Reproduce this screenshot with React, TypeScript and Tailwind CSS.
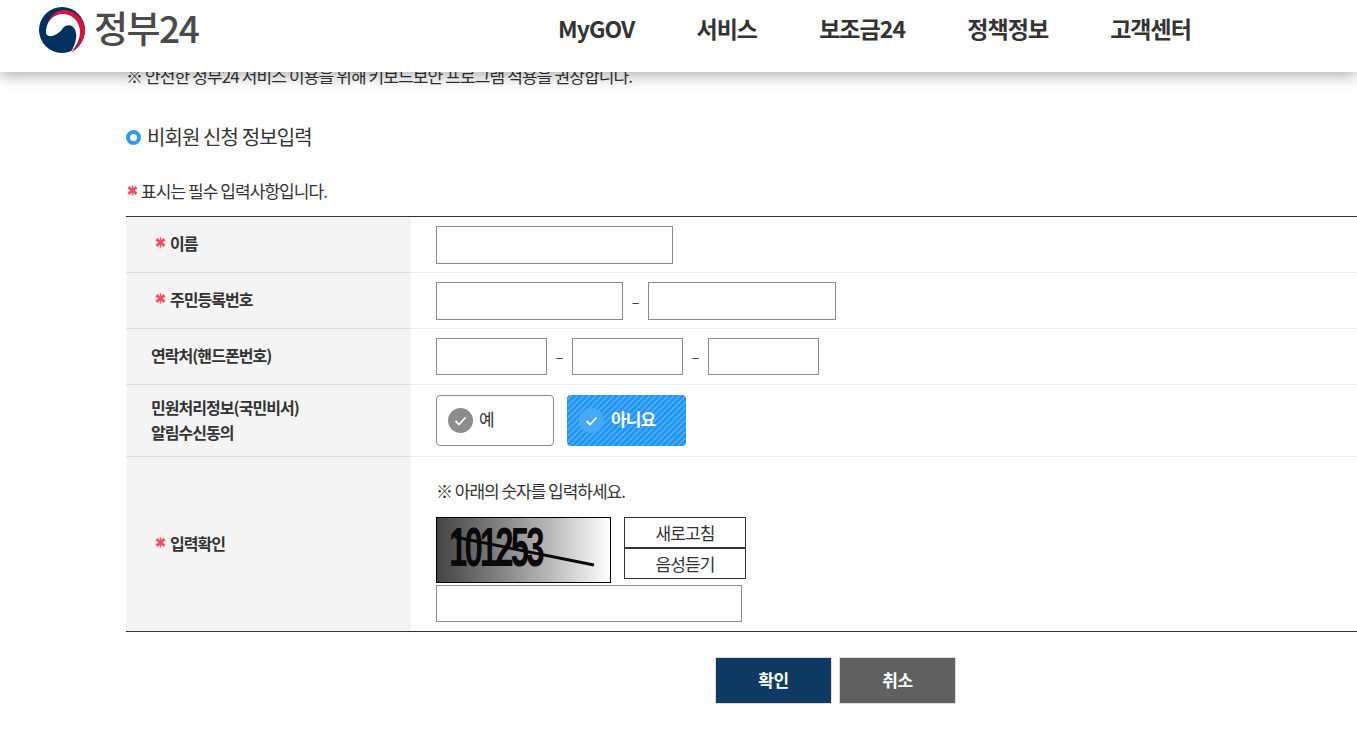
import React from 'react';

const FONT = "font-['Noto_Sans_CJK_KR','Noto_Sans',sans-serif]";

const navItems = ['MyGOV', '서비스', '보조금24', '정책정보', '고객센터'];

function Logo() {
  return (
    <svg width="46" height="46" viewBox="0 0 46 46" className="shrink-0">
      <circle cx="23" cy="23" r="23" fill="#00305f" />
      <path d="M8 19C10 9 17 3 25 3C36 3 46 12 46 23C46 33 40 41 32 46C38 40 42 32 41 24C40 14 32 6.500 24 7C16 7 10 12 8 19Z" fill="#d8133a" />
      <path d="M7 26C6.500 15 14 7 24 7C33 7 40.500 14 41 24C41.500 32 37 40 32 45C36 38 38 31 37 26C36 18 28 16 24 21C21 26 14 30 10 29C8 28.500 7 27 7 26Z" fill="#fff" />
    </svg>
  );
}

function Star() {
  return (
    <svg width="11" height="11" viewBox="0 0 11 11" className="mr-[4px] -mt-[2px] shrink-0">
      <path d="M5.500 0.500V10.500M1 3L10 8M10 3L1 8M2 1.500L9 9.500M9 1.500L2 9.500" stroke="#f0505f" strokeWidth="1.600" fill="none" />
      <circle cx="5.500" cy="5.500" r="2.500" fill="#f0505f" />
    </svg>
  );
}

function Check({ active }: { active?: boolean }) {
  return (
    <svg width="25" height="25" viewBox="0 0 25 25" className="shrink-0">
      <circle cx="12.500" cy="12.500" r="12.500" fill={active ? '#45a9f7' : '#8c8c8c'} />
      <path d="M7.500 13l3.500 3.500 6.500-7" fill="none" stroke="#fff" strokeWidth="1.800" />
    </svg>
  );
}

function TextBox({ className }: { className: string }) {
  return <input type="text" className={`block border border-[#8a8a8a] bg-white ${className}`} />;
}

function Dash() {
  return <span className="w-[25px] text-center text-[14px] text-[#333]">–</span>;
}

function Row({ label, required, height, children }: { label: React.ReactNode; required?: boolean; height: string; children: React.ReactNode }) {
  return (
    <div className={`flex ${height} border-b border-[#eeeeee]`}>
      <div className={`flex w-[285px] shrink-0 items-center bg-[#f4f4f4] pb-[2px] text-[16px] leading-[25px] font-bold tracking-[-0.06em] text-[#333] -mb-px border-b border-[#dddddd] ${required ? 'pl-[29px]' : 'pl-[25px]'}`}>
        {required && <Star />}
        <div>{label}</div>
      </div>
      <div className="flex-1 pl-[25px]">{children}</div>
    </div>
  );
}

export default function App() {
  return (
    <div className={`h-[748px] w-[1357px] overflow-hidden bg-white ${FONT}`}>
      {/* Header */}
      <header className="relative z-10 flex h-[72px] items-start bg-white pl-[39px] shadow-[0_4px_14px_rgba(0,0,0,0.3)]">
        <div className="flex w-[519px] items-center pt-[7px]">
          <Logo />
          <span className="ml-[9px] -mt-[6px] text-[37px] leading-[44px] font-medium tracking-[-0.04em] text-[#4a4a4a]">정부24</span>
        </div>
        <nav className="flex gap-[62px] pt-[12px]">
          {navItems.map((item) => (
            <a key={item} className="text-[23px] leading-[32px] font-bold tracking-[-0.04em] text-[#333]">{item}</a>
          ))}
        </nav>
      </header>

      <main className="w-[1545px] pl-[126px]">
        <p className="-mt-[8px] text-[17px] leading-[24px] tracking-[-0.052em] text-[#333]">※ 안전한 정부24 서비스 이용을 위해 키보드보안 프로그램 적용을 권장합니다.</p>

        <h2 className="mt-[34px] flex items-center text-[20px] leading-[30px] tracking-[-0.045em] text-[#333]">
          <span className="mr-[6px] h-[15px] w-[15px] rounded-full border-[4px] border-[#2b9bf4] bg-white" />
          비회원 신청 정보입력
        </h2>

        <p className="mt-[27px] flex items-center text-[17px] leading-[24px] tracking-[-0.055em] text-[#333]">
          <span className="ml-[1px] -mr-px"><Star /></span>표시는 필수 입력사항입니다.
        </p>

        {/* Form table */}
        <div className="mt-[13px] border-y border-[#333]">
          <Row label="이름" required height="h-[56px]">
            <div className="pt-[9px]"><TextBox className="h-[38px] w-[237px]" /></div>
          </Row>
          <Row label="주민등록번호" required height="h-[56px]">
            <div className="flex items-center pt-[9px]">
              <TextBox className="h-[38px] w-[187px]" />
              <Dash />
              <TextBox className="h-[38px] w-[188px]" />
            </div>
          </Row>
          <Row label="연락처(핸드폰번호)" height="h-[56px]">
            <div className="flex items-center pt-[9px]">
              <TextBox className="h-[37px] w-[111px]" />
              <Dash />
              <TextBox className="h-[37px] w-[111px]" />
              <Dash />
              <TextBox className="h-[37px] w-[111px]" />
            </div>
          </Row>
          <Row label={<>민원처리정보(국민비서)<br />알림수신동의</>} height="h-[72px]">
            <div className="flex gap-[13px] pt-[10px]">
              <div className="flex h-[51px] w-[118px] items-center gap-[6px] rounded-[4px] border border-[#8a8a8a] bg-white pl-[11px] text-[17px] tracking-[-0.05em] text-[#333]">
                <Check />
                <span className="-mt-[3px]">예</span>
              </div>
              <div className="flex h-[51px] w-[119px] items-center gap-[7px] rounded-[4px] bg-[repeating-linear-gradient(135deg,#2196f3_0,#2196f3_3px,#52adf6_3px,#52adf6_4.250px)] pl-[12px] text-[17px] font-bold tracking-[-0.05em] text-white">
                <Check active />
                <span className="-mt-[3px]">아니요</span>
              </div>
            </div>
          </Row>
          <div className="flex h-[174px]">
            <div className="flex w-[285px] shrink-0 items-center bg-[#f4f4f4] pb-[2px] pl-[29px] text-[16px] font-bold tracking-[-0.06em] text-[#333]">
              <Star />
              <div>입력확인</div>
            </div>
            <div className="flex-1 pl-[25px] pt-[22px]">
              <p className="text-[17px] leading-[24px] tracking-[-0.06em] text-[#333]">※ 아래의 숫자를 입력하세요.</p>
              <div className="mt-[14px] flex gap-[13px]">
                <div className="relative h-[66px] w-[175px] border border-black bg-gradient-to-r from-[#444444] to-white pl-[12px] font-['Liberation_Sans',sans-serif] text-[56px] leading-[58px] font-bold text-[#0a0a0a]">
                  <span className="block w-[150px] origin-left scale-x-[0.59] tracking-[-5px]">101253</span>
                  <svg width="175" height="66" className="absolute left-0 top-0">
                    <line x1="18" y1="19" x2="157" y2="47" stroke="#0a0a0a" strokeWidth="3" />
                  </svg>
                </div>
                <div className="flex w-[122px] flex-col">
                  <div className="flex h-[31px] items-center justify-center border border-[#333] text-[17px] tracking-[-0.05em] text-[#333]">새로고침</div>
                  <div className="flex h-[31px] items-center justify-center border border-[#333] text-[17px] tracking-[-0.05em] text-[#333]">음성듣기</div>
                </div>
              </div>
              <TextBox className="mt-[2px] h-[37px] w-[306px]" />
            </div>
          </div>
        </div>

        {/* Buttons */}
        <div className="mt-[25px] flex justify-center gap-[7px]">
          <button className="h-[47px] w-[117px] border border-[#dddddd] bg-[#0e3a63] pb-[2px] text-[17px] font-bold tracking-[-0.03em] text-white">확인</button>
          <button className="h-[47px] w-[117px] border border-[#dddddd] bg-[#606060] pb-[2px] text-[17px] font-bold tracking-[-0.03em] text-white">취소</button>
        </div>
      </main>
    </div>
  );
}
